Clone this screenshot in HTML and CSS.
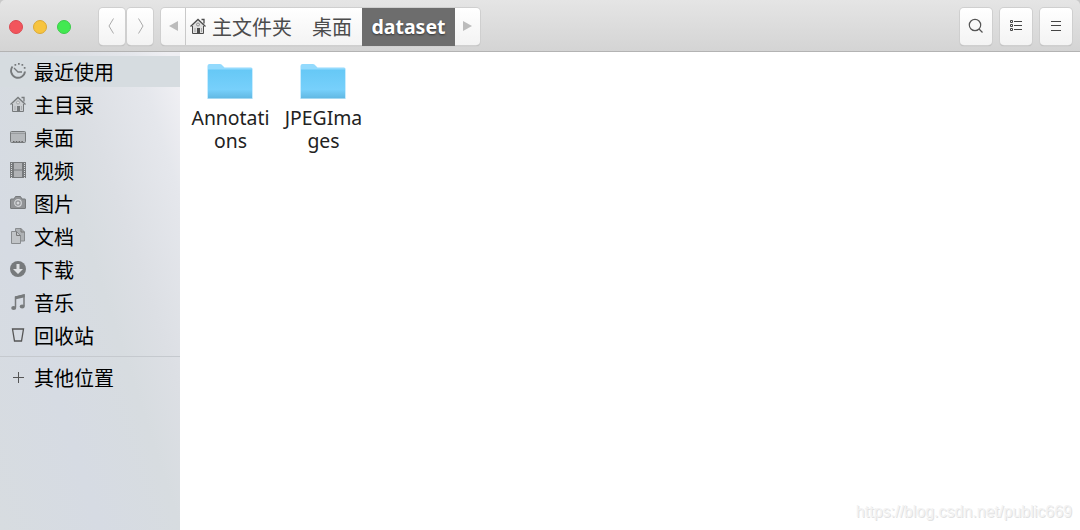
FILE: index.html
```html
<!DOCTYPE html>
<html lang="zh-CN">
<head>
    <meta charset="UTF-8">
    <title>dataset</title>
    <link rel="stylesheet" href="styles.css">
</head>
<body>
    <svg class="defs" width="0" height="0">
        <defs>
            <linearGradient id="blue" x1="0" y1="0" x2="0" y2="1">
                <stop offset="0" stop-color="#66c8f6"/>
                <stop offset="0.7" stop-color="#77d0fb"/>
                <stop offset="1" stop-color="#62b9e4"/>
            </linearGradient>
            <symbol id="home" viewBox="0 0 16 16">
                <path d="M2.5 7.5V15h11V7.5L8 2.5z" fill="#bbb" fill-opacity=".4"/>
                <path d="M.5 8.5L8 1.5l7.500 7M11.500 1.500h2.500v4" fill="none" stroke="currentColor" stroke-width="1.300"/>
                <path d="M2.500 8v7.500h11V8" fill="none" stroke="currentColor"/>
                <circle cx="8" cy="6.500" r="1.500" fill="#ddd" stroke="currentColor" stroke-width=".5"/>
                <path d="M7 10h3v5H7z" fill="currentColor"/>
                <path d="M4.500 10h1v4h-1zM11 10h1v4h-1z" fill="currentColor" fill-opacity=".4"/>
            </symbol>
            <symbol id="folder" viewBox="0 0 46 37">
                <path d="M.5 36V3q0-2 2-2H13q1.500 0 3 2l1.500 1.500H44q1.500 0 1.500 1.500v30z" fill="#93dafd"/>
                <path d="M1 6.500h44V35H1z" fill="url(#blue)"/>
                <path d="M1 35.500h44" stroke="#a5d8f1"/>
            </symbol>
        </defs>
    </svg>

    <div class="header">
        <div class="lights">
            <span class="red"></span>
            <span class="yellow"></span>
            <span class="green"></span>
        </div>
        <div class="nav">
            <span class="btn"><svg width="6" height="16" viewBox="0 0 6 16"><path d="M5.500.5L1 8l4.500 7.500"/></svg></span>
            <span class="btn"><svg width="6" height="16" viewBox="0 0 6 16"><path d="M.5.5L5 8 .5 15.500"/></svg></span>
        </div>
        <div class="path">
            <span class="arrow left"><svg width="9" height="10"><path d="M9 0v10L0 5z"/></svg></span>
            <span class="crumb first"><svg width="16" height="16"><use href="#home"/></svg>主文件夹</span>
            <span class="crumb">桌面</span>
            <span class="crumb current">dataset</span>
            <span class="arrow right"><svg width="9" height="10"><path d="M0 0v10l9-5z"/></svg></span>
        </div>
        <div class="tools">
            <span class="btn"><svg width="16" height="16"><circle cx="7" cy="7" r="5.700"/><path d="M11 11l3.500 3.500"/></svg></span>
            <span class="btn list"><svg width="12" height="11"><path d="M.5.500h2v2h-2zM.5 4.500h2v2h-2zM.5 8.500h2v2h-2zM4 1.500h8M4 5.500h8M4 9.500h8"/></svg></span>
            <span class="btn list"><svg width="10" height="10"><path d="M0 .5h10M0 4.500h10M0 9.500h10"/></svg></span>
        </div>
    </div>

    <div class="main">
        <ul class="sidebar">
            <li class="select">
                <svg viewBox="0 0 16 16"><path d="M2.500 3.500A7 7 0 1 0 15 8.500" fill="none" stroke="currentColor" stroke-width="1.900"/><path d="M4 5l4 4h4" fill="none" stroke="currentColor" stroke-width="1.300"/><path d="M4.500 1h1.700v1.700H4.500zM8 0h1.700v1.700H8zM11.500 1h1.700v1.700h-1.700zM13.800 4h1.700v1.700h-1.700z" fill="currentColor"/></svg>最近使用
            </li>
            <li><svg viewBox="0 0 16 16"><use href="#home"/></svg>主目录</li>
            <li>
                <svg viewBox="0 0 16 16"><rect x=".5" y="2.500" width="15" height="11" rx="1" fill="#b5b8bb" stroke="currentColor"/><path d="M1 4.500h14" stroke="#999c9f"/><path d="M3 12.500h10" stroke="#666" stroke-dasharray="1.500 1.300"/></svg>桌面
            </li>
            <li>
                <svg viewBox="0 0 16 16"><path d="M0 0h16v16H0z" fill="currentColor"/><path d="M4 1h8v6.500H4zM4 8.500h8V15H4z" fill="#b0b2b5"/><path d="M1.500 1v15M14.500 1v15" stroke="#d5d7da" stroke-dasharray="1 1"/></svg>视频
            </li>
            <li>
                <svg viewBox="0 0 16 16"><path d="M1 4h3l1.500-2.500h5L12 4h3q.5 0 .5.500V13q0 .5-.5.500H1q-.5 0-.5-.5V4.500Q.5 4 1 4z" fill="#919396" stroke="currentColor"/><circle cx="8" cy="8" r="3.300" fill="#909295" stroke="#d5d7da" stroke-width="1.200"/><circle cx="8" cy="8" r="1.500" fill="#d5d7da"/></svg>图片
            </li>
            <li>
                <svg viewBox="0 0 16 16"><path d="M5.500.5H11L14.500 4v9h-9z" fill="#aeb1b4" stroke="#898c8f"/><path d="M11 .5V4h3.500" fill="none" stroke="#777"/><path d="M1.500 3.500h5L10.500 7.500v8h-9z" fill="#c1c4c7" stroke="#898c8f"/><path d="M6.500 3.500v4h4" fill="none" stroke="#777"/></svg>文档
            </li>
            <li>
                <svg viewBox="0 0 16 16"><circle cx="8" cy="8" r="8" fill="currentColor"/><path d="M6.500 3h3v5H13l-5 5-5-5h3.500z" fill="#dfe1e4"/></svg>下载
            </li>
            <li>
                <svg viewBox="0 0 16 16"><path d="M5.500 13.500V3L14 1v11" fill="none" stroke="currentColor" stroke-width="1.500"/><path d="M5 2.500L14.700.300v3L5 5.500z" fill="currentColor"/><ellipse cx="3.700" cy="14" rx="2.500" ry="2" fill="currentColor"/><ellipse cx="12.200" cy="12.500" rx="2.500" ry="2" fill="currentColor"/></svg>音乐
            </li>
            <li class="dark">
                <svg viewBox="0 0 16 16"><path d="M2.500 2h11l-2 12h-7z" fill="none" stroke="currentColor" stroke-width="1.300"/></svg>回收站
            </li>
            <li class="other dark">
                <svg viewBox="0 0 16 16"><path d="M8.500 3v11M3 8.500h11" stroke="currentColor"/></svg>其他位置
            </li>
        </ul>
        <div class="files">
            <div class="file">
                <svg width="46" height="37"><use href="#folder"/></svg>
                <span>Annotati<br>ons</span>
            </div>
            <div class="file">
                <svg width="46" height="37"><use href="#folder"/></svg>
                <span>JPEGIma<br>ges</span>
            </div>
        </div>
        <div class="watermark">https://blog.csdn.net/public669</div>
    </div>
</body>
</html>
```
FILE: styles.css
```css
*{
    margin: 0;
    padding: 0;
    box-sizing: border-box;
}
body{
    height: 530px;
    overflow: hidden;
    background: #c9c9c9;
    font: 20px/23px "Noto Sans", "Noto Sans CJK SC", sans-serif;
}
svg{
    display: block;
    flex: none;
}
.defs{
    position: absolute;
}
.header{
    height: 52px;
    display: flex;
    align-items: flex-start;
    padding: 8px 8px 0 9px;
    border-bottom: 1px solid #b3b3b3;
    border-radius: 5px 5px 0 0;
    background: linear-gradient(#e5e5e5, #d4d4d4);
}
.lights{
    display: flex;
    gap: 10px;
    margin-top: 12px;
    width: 90px;
}
.lights span{
    width: 14px;
    height: 14px;
    border-radius: 50%;
    border: 1px solid #dc4a52;
    background: #f2555c;
}
.lights .yellow{
    border-color: #dba936;
    background: #f7c43f;
}
.lights .green{
    border-color: #3ccb49;
    background: #42e951;
}
.nav{
    display: flex;
    gap: 2px;
    margin-right: 8px;
}
.btn{
    width: 26px;
    height: 37px;
    display: flex;
    align-items: center;
    justify-content: center;
    padding-bottom: 1px;
    border-radius: 4px;
    background: linear-gradient(#fff, #f3f3f3);
    box-shadow: 0 0 0 1px #cfcfcf, 0 1px 1px #a5a5a5;
}
.btn svg{
    fill: none;
    stroke: #555;
    stroke-width: 1.2;
}
.btn.list{
    padding-bottom: 2px;
}
.list svg{
    stroke: #444;
    stroke-width: 1;
}
.nav svg{
    stroke: #aaa;
    stroke-width: 1;
}
.nav .btn{
    padding-right: 2px;
}
.nav .btn + .btn{
    padding: 0 0 1px 2px;
}
.path{
    height: 37px;
    display: flex;
    border-radius: 4px;
    background: linear-gradient(#fff, #f3f3f3);
    box-shadow: 0 0 0 1px #cfcfcf, 0 1px 1px #a5a5a5;
    color: #4c4c4c;
}
.arrow{
    width: 25px;
    display: flex;
    align-items: center;
    justify-content: center;
    padding-bottom: 1px;
    fill: #bcbcbc;
}
.left{
    border-right: 1px solid #c9c9c9;
}
.crumb{
    width: 60px;
    display: flex;
    align-items: center;
    padding: 1px 0 0 10px;
}
.crumb.first{
    width: 116px;
    padding-left: 4px;
    gap: 6px;
}
.crumb svg{
    margin-bottom: 3px;
}
.crumb.current{
    width: 93px;
    height: 38px;
    padding: 0 0 2px;
    justify-content: center;
    background: #6d6d6d;
    color: #fff;
    font-weight: bold;
    font-size: 19.5px;
    text-shadow: 0 1px 2px #333;
}
.tools{
    display: flex;
    gap: 8px;
    margin-left: auto;
}
.tools .btn{
    width: 32px;
}
.main{
    height: 478px;
    display: flex;
    position: relative;
    background: #fff;
}
.sidebar{
    width: 180px;
    padding-top: 4px;
    list-style: none;
    background: linear-gradient(72deg, #d7dce0 0%, #d6dbe3 30%, #d7dce0 54%, #dcdfe4 67%, #e5e7ec 86%, #efeff3 96%);
}
.sidebar li{
    height: 31px;
    margin-bottom: 2px;
    padding: 2px 0 0 10px;
    display: flex;
    align-items: center;
    gap: 8px;
    color: #000;
}
.sidebar li svg{
    width: 16px;
    height: 16px;
    margin-bottom: 4px;
    color: #777a7c;
}
.sidebar .dark svg{
    color: #555;
}
.sidebar .select{
    background: #d6dce0;
}
.sidebar .other{
    height: 38px;
    margin-top: 5px;
    padding-top: 5px;
    border-top: 1px solid #c5c9ce;
}
.sidebar .other svg{
    margin-bottom: 2px;
}
.files{
    display: flex;
    padding: 11px 0 0 4px;
}
.file{
    width: 93px;
    display: flex;
    flex-direction: column;
    align-items: center;
    gap: 6px;
    color: #222;
    font-size: 19.4px;
    text-align: center;
}
.file svg{
    margin-right: 1px;
}
.watermark{
    position: absolute;
    right: 8px;
    bottom: 7px;
    font: 16px/23px "Liberation Sans", Arial, sans-serif;
    color: #f3f3f3;
    text-shadow: 1px 1px 0 #e2e2e2;
}
```
